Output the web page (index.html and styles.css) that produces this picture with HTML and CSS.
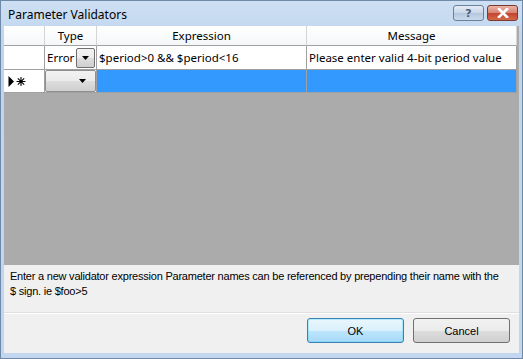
FILE: index.html
```html
<!DOCTYPE html>
<html lang="en">

<head>
    <meta charset="UTF-8">
    <title>Parameter Validators</title>
    <link rel="stylesheet" href="styles.css">
</head>

<body>
    <div class="win">
        <div class="titlebar">
            <span class="title">Parameter Validators</span>
            <div class="caps">
                <div class="cap help">?</div>
                <div class="cap close">
                    <svg width="14" height="10" viewBox="0 0 14 10">
                        <path d="M3 1 L11 9 M11 1 L3 9" stroke="#fff" stroke-width="2.6" stroke-linecap="square" />
                    </svg>
                </div>
            </div>
        </div>
        <div class="client">
            <div class="grid">
                <div class="row head">
                    <div class="cell rh"></div>
                    <div class="cell c-type">Type</div>
                    <div class="cell c-expr">Expression</div>
                    <div class="cell c-msg">Message</div>
                </div>
                <div class="row">
                    <div class="cell rh"></div>
                    <div class="cell c-type">
                        <span class="combo-txt">Error</span>
                        <span class="drop">
                            <svg width="7" height="4" viewBox="0 0 7 4"><path d="M0 0 H7 L3.5 4 Z" fill="#000" /></svg>
                        </span>
                    </div>
                    <div class="cell c-expr left">$period&gt;0 &amp;&amp; $period&lt;16</div>
                    <div class="cell c-msg left">Please enter valid 4-bit period value</div>
                </div>
                <div class="row newrow">
                    <div class="cell rh">
                        <svg width="19" height="11" viewBox="0 0 19 11">
                            <path d="M0.5 0 L6 5.5 L0.5 11 Z" fill="#000" />
                            <path d="M13 1 V10 M8.5 5.5 H17.5 M9.8 2.3 L16.2 8.7 M16.2 2.3 L9.8 8.7" stroke="#000" stroke-width="1.1" />
                        </svg>
                    </div>
                    <div class="cell c-type">
                        <span class="combo">
                            <svg width="7" height="4" viewBox="0 0 7 4"><path d="M0 0 H7 L3.5 4 Z" fill="#000" /></svg>
                        </span>
                    </div>
                    <div class="cell c-expr sel"></div>
                    <div class="cell c-msg sel"></div>
                </div>
                <div class="empty"></div>
            </div>
            <div class="hint">Enter a new validator expression Parameter names can be referenced by prepending their name with the $ sign. ie $foo&gt;5</div>
            <div class="buttons">
                <button class="btn ok">OK</button>
                <button class="btn">Cancel</button>
            </div>
        </div>
    </div>
</body>

</html>
```

FILE: styles.css
```css
body {
    margin: 0;
    width: 523px;
    height: 359px;
    overflow: hidden;
}

.win {
    height: 359px;
    display: flex;
    flex-direction: column;
    background: linear-gradient(#cddff3, #bfd5ee 40px, #c2d7ef);
    box-sizing: border-box;
    border: 1px solid #6f8aa8;
}

.titlebar {
    height: 25px;
    display: flex;
    align-items: flex-start;
    justify-content: space-between;
}

.title {
    font-family: "Noto Sans", sans-serif;
    font-size: 12px;
    color: #000;
    margin: 5px 0 0 7px;
}

.caps {
    display: flex;
    gap: 3px;
    margin: 4px 4px 0 0;
}

.cap {
    height: 16px;
    border: 1px solid #6b7f99;
    border-radius: 3px;
    box-sizing: border-box;
    display: flex;
    align-items: center;
    justify-content: center;
}

.help {
    width: 31px;
    background: linear-gradient(#e4ecf6, #c8d6e8 50%, #b5c7de 51%, #c9d9ec);
    font-family: "DejaVu Sans", sans-serif;
    font-size: 11px;
    font-weight: bold;
    color: #4b5d75;
}

.close {
    width: 31px;
    border-color: #7a3a30;
    background: linear-gradient(#eab3a5, #d88372 50%, #c4442d 51%, #d26a4c);
}

.client {
    flex: 1;
    margin: 0 3px 5px 3px;
    background: #f0f0f0;
    display: flex;
    flex-direction: column;
}

.grid {
    height: 239px;
    display: flex;
    flex-direction: column;
    border-right: 2px solid #ababab;
    background: #ababab;
    font-family: "Noto Sans", sans-serif;
    font-size: 11.5px;
}

.row {
    display: flex;
    height: 24px;
    background: #fff;
}

.row.head {
    height: 20px;
    background: linear-gradient(#fff, #f5f6f8);
}

.cell {
    box-sizing: border-box;
    border-right: 1px solid #a0a0a0;
    border-bottom: 1px solid #a0a0a0;
    display: flex;
    align-items: center;
    justify-content: center;
    white-space: nowrap;
    overflow: hidden;
}

.head .cell {
    border-right-color: #d5d5d5;
    border-bottom-color: #a0a0a0;
}

.rh {
    width: 41px;
    background: #fff;
    justify-content: flex-start;
    padding-left: 4px;
}

.head .rh {
    background: transparent;
}

.c-type {
    width: 52px;
}

.c-expr {
    width: 210px;
}

.c-msg {
    flex: 1;
}

.left {
    justify-content: flex-start;
    padding-left: 2px;
}

.combo-txt {
    flex: 1;
    padding-left: 2px;
}

.drop {
    width: 19px;
    height: 20px;
    margin-right: 1px;
    box-sizing: border-box;
    border: 1px solid #707070;
    border-radius: 2px;
    background: linear-gradient(#f2f2f2, #ebebeb 50%, #dddddd 51%, #cfcfcf);
    display: flex;
    align-items: center;
    justify-content: center;
}

.newrow {
    height: 23px;
}

.combo {
    width: 51px;
    height: 22px;
    box-sizing: border-box;
    border: 1px solid #8e8f8f;
    border-radius: 2px;
    background: linear-gradient(#f2f2f2, #ebebeb 50%, #dddddd 51%, #cfcfcf);
    display: flex;
    align-items: center;
    justify-content: flex-end;
    padding-right: 9px;
}

.sel {
    background: #3399ff;
}

.empty {
    flex: 1;
}

.hint {
    height: 48px;
    box-sizing: border-box;
    padding: 4px 16px 0 6px;
    font-family: "Liberation Sans", sans-serif;
    font-size: 11px;
    letter-spacing: -0.22px;
    line-height: 15px;
    color: #000;
    border-bottom: 1px solid #dfdfdf;
}

.buttons {
    flex: 1;
    display: flex;
    justify-content: flex-end;
    align-items: flex-start;
    gap: 9px;
    padding: 4px 9px 0 0;
    border-top: 1px solid #fff;
}

.btn {
    width: 97px;
    height: 25px;
    border: 1px solid #707070;
    border-radius: 3px;
    background: linear-gradient(#f2f2f2, #ebebeb 50%, #dddddd 51%, #cfcfcf);
    font-family: "Liberation Sans", sans-serif;
    font-size: 11px;
    color: #000;
}

.btn.ok {
    border-color: #3c7fb1;
    background: linear-gradient(#eaf6fd, #d9f0fc 50%, #bee6fd 51%, #a7d9f5);
    box-shadow: inset 0 0 0 1px #48d4fd55;
}
```
